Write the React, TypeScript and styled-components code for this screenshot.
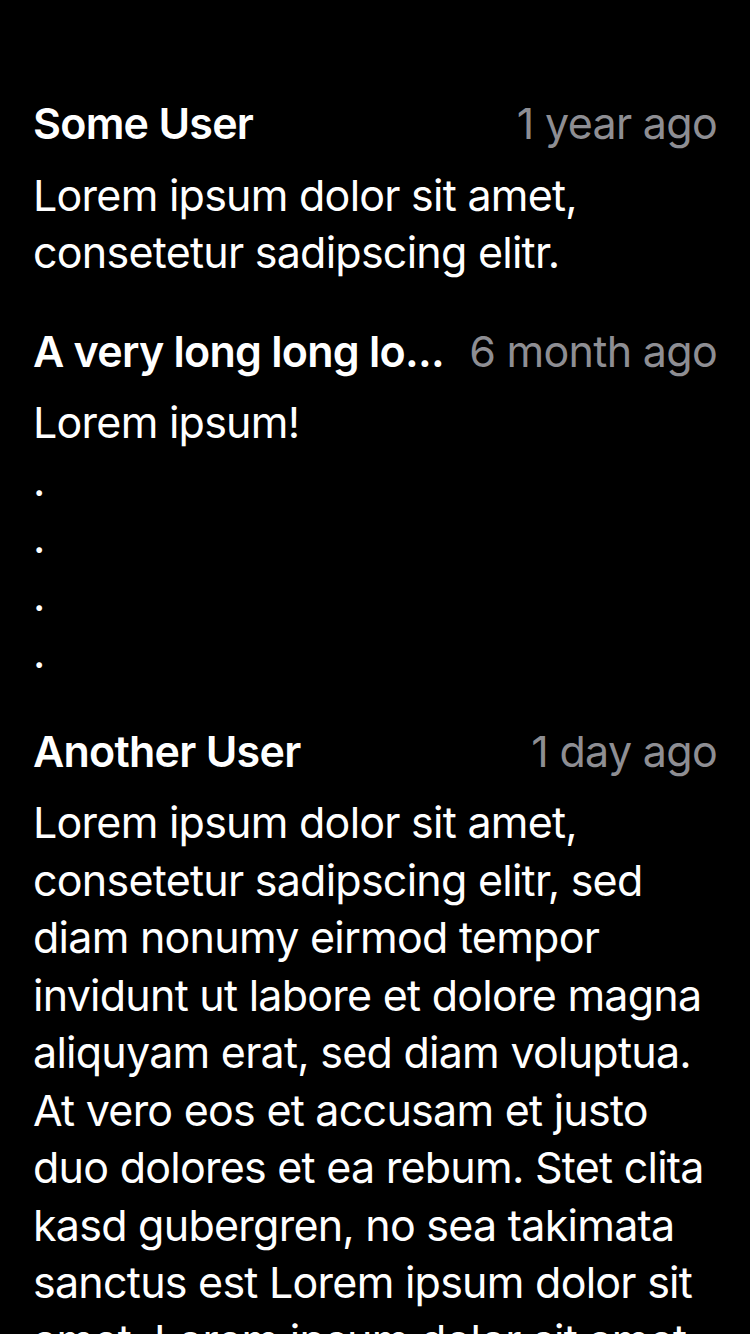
import React from "react";
import styled, { createGlobalStyle } from "styled-components";

const GlobalStyle = createGlobalStyle`
  html, body {
    margin: 0;
    padding: 0;
    background: #000000;
  }
  body {
    font-family: Inter, "Noto Sans", "Liberation Sans", sans-serif;
    -webkit-font-smoothing: antialiased;
  }
`;

const Screen = styled.main`
  min-height: 1334px;
  background: #000000;
  box-sizing: border-box;
  padding: 95px 33px 0 33px;
  display: flex;
  flex-direction: column;
  gap: 41px;
`;

const Comment = styled.article`
  display: flex;
  flex-direction: column;
  gap: 14px;
`;

const Header = styled.header`
  display: flex;
  align-items: baseline;
  gap: 16px;
  font-size: 43px;
  line-height: 57.5px;
`;

const Name = styled.span`
  flex: 1 1 auto;
  min-width: 0;
  color: #ffffff;
  font-weight: 600;
  letter-spacing: -0.75px;
  white-space: nowrap;
  overflow: hidden;
  text-overflow: ellipsis;
`;

const Time = styled.span`
  flex: 0 0 auto;
  color: #8e8e93;
  font-weight: 400;
  letter-spacing: -0.7px;
`;

const Body = styled.p`
  margin: 0;
  color: #ffffff;
  font-size: 43px;
  line-height: 57.5px;
  font-weight: 400;
  letter-spacing: -0.75px;
  white-space: pre-line;
`;

type CommentData = { name: string; time: string; text: string };

const comments: CommentData[] = [
  {
    name: "Some User",
    time: "1 year ago",
    text: "Lorem ipsum dolor sit amet, consetetur sadipscing elitr.",
  },
  {
    name: "A very long long lo...",
    time: "6 month ago",
    text: "Lorem ipsum!\n.\n.\n.\n.",
  },
  {
    name: "Another User",
    time: "1 day ago",
    text:
      "Lorem ipsum dolor sit amet, consetetur sadipscing elitr, sed diam nonumy eirmod tempor invidunt ut labore et dolore magna aliquyam erat, sed diam voluptua. At vero eos et accusam et justo duo dolores et ea rebum. Stet clita kasd gubergren, no sea takimata sanctus est Lorem ipsum dolor sit amet. Lorem ipsum dolor sit amet, consetetur sadipscing elitr.",
  },
];

export default function App() {
  return (
    <>
      <GlobalStyle />
      <Screen>
        {comments.map((c) => (
          <Comment key={c.name}>
            <Header>
              <Name>{c.name}</Name>
              <Time>{c.time}</Time>
            </Header>
            <Body>{c.text}</Body>
          </Comment>
        ))}
      </Screen>
    </>
  );
}
